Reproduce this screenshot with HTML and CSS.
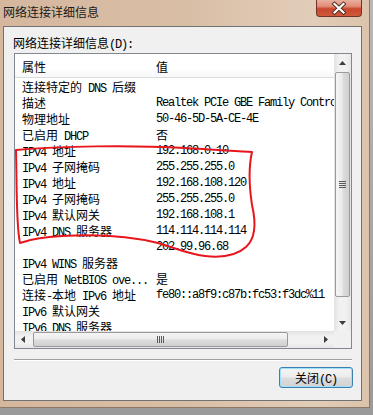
FILE: index.html
```html
<!DOCTYPE html>
<html lang="zh">
<head>
<meta charset="utf-8">
<title>网络连接详细信息</title>
<link rel="stylesheet" href="styles.css">
</head>
<body>
<div class="window">
  <div class="titlebar">
    <span class="title">网络连接详细信息</span>
    <div class="close">
      <svg width="46" height="17" viewBox="0 0 46 17">
        <path d="M18.5 4 L27.5 12.5 M27.5 4 L18.5 12.5" stroke="#4a2a22" stroke-width="4" stroke-linecap="square"/>
        <path d="M18.5 4 L27.5 12.5 M27.5 4 L18.5 12.5" stroke="#ffffff" stroke-width="2.2" stroke-linecap="square"/>
      </svg>
    </div>
  </div>
  <div class="client">
    <div class="label">网络连接详细信息<span class="m">(D):</span></div>
    <div class="listview">
      <div class="lv-content">
        <div class="lv-header"><span class="k">属性</span><span class="v">值</span></div>
        <div class="lv-rows">
          <div class="row"><span class="k">连接特定的<span class="m"> DNS </span>后缀</span><span class="v"></span></div>
          <div class="row"><span class="k">描述</span><span class="v m">Realtek PCIe GBE Family Controller</span></div>
          <div class="row"><span class="k">物理地址</span><span class="v m">50-46-5D-5A-CE-4E</span></div>
          <div class="row"><span class="k">已启用<span class="m"> DHCP</span></span><span class="v">否</span></div>
          <div class="row"><span class="k"><span class="m">IPv4 </span>地址</span><span class="v m">192.168.0.10</span></div>
          <div class="row"><span class="k"><span class="m">IPv4 </span>子网掩码</span><span class="v m">255.255.255.0</span></div>
          <div class="row"><span class="k"><span class="m">IPv4 </span>地址</span><span class="v m">192.168.108.120</span></div>
          <div class="row"><span class="k"><span class="m">IPv4 </span>子网掩码</span><span class="v m">255.255.255.0</span></div>
          <div class="row"><span class="k"><span class="m">IPv4 </span>默认网关</span><span class="v m">192.168.108.1</span></div>
          <div class="row"><span class="k"><span class="m">IPv4 DNS </span>服务器</span><span class="v m">114.114.114.114</span></div>
          <div class="row"><span class="k"></span><span class="v m">202.99.96.68</span></div>
          <div class="row"><span class="k"><span class="m">IPv4 WINS </span>服务器</span><span class="v"></span></div>
          <div class="row"><span class="k">已启用<span class="m"> NetBIOS ove...</span></span><span class="v">是</span></div>
          <div class="row"><span class="k">连接<span class="m">-</span>本地<span class="m"> IPv6 </span>地址</span><span class="v m">fe80::a8f9:c87b:fc53:f3dc%11</span></div>
          <div class="row"><span class="k"><span class="m">IPv6 </span>默认网关</span><span class="v"></span></div>
          <div class="row"><span class="k"><span class="m">IPv6 DNS </span>服务器</span><span class="v"></span></div>
        </div>
      </div>
      <div class="vscroll">
        <div class="sbtn">
          <svg width="17" height="17" viewBox="0 0 17 17"><path d="M5 11 L8.5 7 L12 11 Z" fill="#3c3c3c"/></svg>
        </div>
        <div class="vthumb">
          <svg width="8" height="7" viewBox="0 0 8 7">
            <path d="M0 0.5 H7 M0 2.5 H7 M0 4.5 H7 M0 6.5 H7" stroke="#5a5a5a" stroke-width="1"/>
          </svg>
        </div>
        <div class="strack"></div>
        <div class="sbtn">
          <svg width="17" height="17" viewBox="0 0 17 17"><path d="M5 7 L12 7 L8.5 11 Z" fill="#3c3c3c"/></svg>
        </div>
      </div>
      <div class="hscroll">
        <div class="sbtn">
          <svg width="17" height="17" viewBox="0 0 17 17"><path d="M10 5 L10 12 L6 8.5 Z" fill="#3c3c3c"/></svg>
        </div>
        <div class="hthumb">
          <svg width="7" height="8" viewBox="0 0 7 8">
            <path d="M0.5 0 V7 M2.5 0 V7 M4.5 0 V7 M6.5 0 V7" stroke="#5a5a5a" stroke-width="1"/>
          </svg>
        </div>
        <div class="strack"></div>
        <div class="sbtn">
          <svg width="17" height="17" viewBox="0 0 17 17"><path d="M7 5 L7 12 L11 8.5 Z" fill="#3c3c3c"/></svg>
        </div>
      </div>
      <div class="corner"></div>
    </div>
    <div class="sep"></div>
    <div class="buttons">
      <button class="btn">关闭<span class="m">(C)</span></button>
    </div>
  </div>
</div>
<svg class="annot" width="373" height="415" viewBox="0 0 373 415">
  <path d="M16 150 C 60 146, 130 145, 185 148 C 215 150, 240 151, 252 152 C 249 165, 249 185, 252 205 C 256 222, 256 238, 246 247 C 236 256, 222 258, 205 256 C 188 254, 172 247, 158 243 C 130 236, 95 234, 62 236 C 42 237, 28 240, 20 243 C 16 225, 17 190, 16 150"
        fill="none" stroke="#e8161c" stroke-width="2" stroke-linecap="round" stroke-linejoin="round"/>
</svg>
</body>
</html>
```

FILE: styles.css
```css
html, body {
  margin: 0;
  padding: 0;
}
body {
  width: 373px;
  height: 415px;
  overflow: hidden;
  position: relative;
  background: linear-gradient(to bottom, #b8b8b8, #9a9a9a);
  font-family: "Noto Sans CJK SC", "Liberation Sans", sans-serif;
  font-size: 12px;
  color: #000;
}
.m {
  font-family: "Liberation Mono", "Noto Sans CJK SC", monospace;
  font-size: 12px;
  letter-spacing: -1.2px;
}
.window {
  width: 370px;
  height: 408px;
  box-sizing: border-box;
  padding: 0 7px 6px 3px;
  display: flex;
  flex-direction: column;
  background: linear-gradient(to right, #d5b79e 0%, #d9bea6 50%, #e2cdb9 85%, #dcc3ab 100%);
  border-right: 1px solid #8c7868;
  border-bottom: 1px solid #8c7868;
}
.titlebar {
  height: 26px;
  display: flex;
  align-items: flex-start;
  flex-shrink: 0;
}
.title {
  line-height: 26px;
  color: #1a1a1a;
  font-size: 12px;
  margin-top: -1px;
}
.close {
  margin-left: auto;
  width: 46px;
  height: 17px;
  box-sizing: border-box;
  border: 1px solid #70322a;
  border-top: none;
  border-radius: 0 0 4px 4px;
  background: linear-gradient(to bottom, #eab0a0 0%, #e08a74 40%, #c9472e 55%, #cf5a3a 100%);
  overflow: hidden;
}
.close svg {
  display: block;
  margin: 0 -1px;
}
.client {
  flex: 1;
  background: #f0f0f0;
  border: 1px solid #727272;
  box-sizing: border-box;
  padding: 0 0 0 10px;
  display: flex;
  flex-direction: column;
}
.label {
  margin: 8px 0 0 -1px;
  height: 16px;
  line-height: 16px;
}
.listview {
  margin-top: 2px;
  width: 338px;
  height: 296px;
  box-sizing: border-box;
  border: 1px solid #828790;
  background: #fff;
  display: grid;
  grid-template-columns: 319px 17px;
  grid-template-rows: 277px 17px;
}
.lv-content {
  overflow: hidden;
  white-space: nowrap;
}
.lv-header {
  height: 23px;
  border-bottom: 1px solid #dcdcdc;
  display: flex;
  align-items: center;
  background: linear-gradient(to bottom, #ffffff 60%, #f7f8f9);
}
.lv-header .k, .lv-header .v {
  line-height: 23px;
  padding-top: 2px;
}
.lv-rows {
  padding-top: 1px;
}
.row {
  display: flex;
  height: 16px;
  line-height: 16px;
}
.k {
  width: 134px;
  padding-left: 7px;
  flex-shrink: 0;
  overflow: hidden;
}
.v {
  flex: 1;
  overflow: hidden;
}
.vscroll {
  display: flex;
  flex-direction: column;
  background: linear-gradient(to right, #e2e2e2, #f1f1f1 30%, #f1f1f1 70%, #e6e6e6);
}
.hscroll {
  display: flex;
  background: linear-gradient(to bottom, #e2e2e2, #f1f1f1 30%, #f1f1f1 70%, #e6e6e6);
}
.sbtn {
  width: 17px;
  height: 17px;
  flex-shrink: 0;
}
.sbtn svg {
  display: block;
}
.strack {
  flex: 1;
}
.vthumb {
  margin-top: 1px;
  height: 225px;
  margin-left: 1px;
  width: 15px;
  box-sizing: border-box;
  border: 1px solid #9a9a9a;
  border-radius: 2px;
  background: linear-gradient(to right, #f5f5f5, #ececec 45%, #dcdcdc 55%, #d0d0d0);
  display: flex;
  align-items: center;
  justify-content: center;
}
.hthumb {
  margin-left: 1px;
  width: 255px;
  margin-top: 1px;
  height: 15px;
  box-sizing: border-box;
  border: 1px solid #9a9a9a;
  border-radius: 2px;
  background: linear-gradient(to bottom, #f5f5f5, #ececec 45%, #dcdcdc 55%, #d0d0d0);
  display: flex;
  align-items: center;
  justify-content: center;
}
.vthumb svg, .hthumb svg {
  display: block;
}
.corner {
  background: #f0f0f0;
}
.sep {
  margin-top: 10px;
  width: 338px;
  height: 1px;
  background: #a0a0a0;
  border-bottom: 1px solid #ffffff;
}
.buttons {
  display: flex;
  justify-content: flex-end;
  padding-right: 8px;
  margin-top: 6px;
}
.btn {
  width: 74px;
  height: 21px;
  padding: 0;
  margin: 0;
  border: 1px solid #3c7fb1;
  border-radius: 3px;
  box-shadow: inset 0 0 0 1px #9fe0fa;
  background: linear-gradient(to bottom, #f4f4f4 0%, #ececec 48%, #dddddd 52%, #d2d2d2 100%);
  font-family: "Noto Sans CJK SC", "Liberation Sans", sans-serif;
  font-size: 12px;
  line-height: 19px;
  color: #000;
}
.annot {
  position: absolute;
  left: 0;
  top: 0;
  pointer-events: none;
}
```
